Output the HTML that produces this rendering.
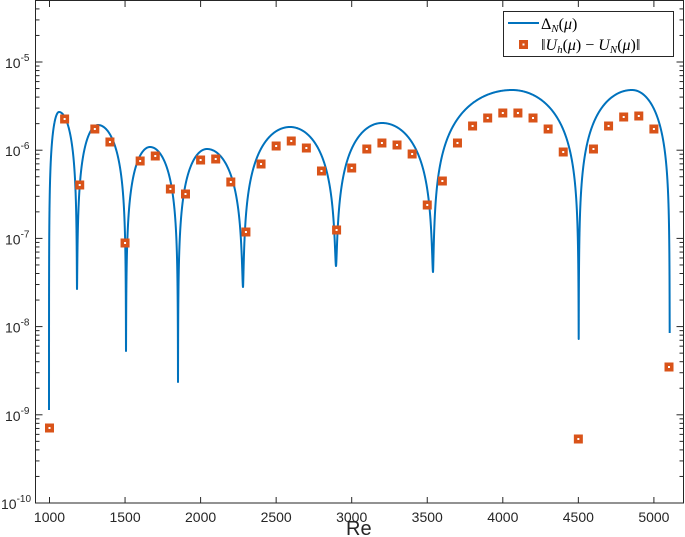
<!DOCTYPE html>
<html><head><meta charset="utf-8"><style>
html,body{margin:0;padding:0;background:#fff;}
svg{display:block;font-family:"Liberation Sans",sans-serif;}
</style></head><body>
<svg id="s" width="685" height="537" viewBox="0 0 685 537" xmlns="http://www.w3.org/2000/svg">
<rect x="0" y="0" width="685" height="537" fill="#fff"/>
<g id="ticks" stroke="#262626" stroke-width="1"></g>
<path id="curve" fill="none" stroke="#0072BD" stroke-width="2" stroke-linejoin="round"/>
<g id="marks"></g>
<rect x="35.5" y="0.5" width="648" height="502.5" fill="none" stroke="#262626" stroke-width="1"/>
<g id="labels" fill="#262626" font-size="14"></g>
<text x="346" y="535" font-size="20" fill="#262626">Re</text>
<rect x="503.5" y="11.5" width="170" height="45" fill="#fff" stroke="#262626" stroke-width="1"/>
<line x1="508" y1="23" x2="539" y2="23" stroke="#0072BD" stroke-width="2"/>
<rect x="519" y="40" width="9" height="9" fill="#D95319"/><rect x="522.5" y="43.5" width="2" height="2" fill="#fff"/>
<text x="541" y="29" font-family="Liberation Serif,serif" font-size="16" fill="#000">Δ<tspan font-style="italic" font-size="11" dy="3">N</tspan><tspan dy="-3">(</tspan><tspan font-style="italic">μ</tspan>)</text>
<text x="541" y="50" font-family="Liberation Serif,serif" font-size="16" fill="#000">‖<tspan font-style="italic">U</tspan><tspan font-style="italic" font-size="11" dy="3">h</tspan><tspan dy="-3">(</tspan><tspan font-style="italic">μ</tspan>) − <tspan font-style="italic">U</tspan><tspan font-style="italic" font-size="11" dy="3">N</tspan><tspan dy="-3">(</tspan><tspan font-style="italic">μ</tspan>)‖</text>
</svg>
<script>
var NS="http://www.w3.org/2000/svg";
function el(t,a,p){var e=document.createElementNS(NS,t);for(var k in a)e.setAttribute(k,a[k]);p.appendChild(e);return e;}
var T=document.getElementById('ticks'),L=document.getElementById('labels');
var D=88.2,Y10=503;
function ypx(e){return Y10-(e+10)*D;}
for(var e=-10;e<=-4;e++){
  for(var m=1;m<10;m++){
    var y=ypx(e)-Math.log10(m)*D; if(y<1||y>503)continue;
    var len=(m==1)?7:4;
    el('line',{x1:35.5,y1:y,x2:35.5+len,y2:y},T);
    el('line',{x1:683.5,y1:y,x2:683.5-len,y2:y},T);
  }
  if(e<=-5){var y0=ypx(e);var t=el('text',{x:e==-10?1:5,y:y0+6},L);t.textContent='10';
   var s=el('tspan',{dy:-7,'font-size':10},t);s.textContent=String(e);}
}
for(var r=1000;r<=5000;r+=500){var x=49.5+(r-1000)*0.1511;
 el('line',{x1:x,y1:503,x2:x,y2:497},T);el('line',{x1:x,y1:1,x2:x,y2:7},T);
 var t=el('text',{x:x,y:522,'text-anchor':'middle'},L);t.textContent=r;}
var Z=[[49,410],[77,289],[126,351],[178,382],[243,287],[336,266],[433,272],[578.7,339],[669.7,333]];
var P=[[59,112],[98,125],[150,147],[207,149],[290,127],[382,123],[512,90],[632,90]];
var d='';
for(var i=0;i<P.length;i++){
 var x0=Z[i][0],x1=Z[i+1][0],px=P[i][0],py=P[i][1];
 var r0=Math.pow(10,-(Z[i][1]-py)/D),r1=Math.pow(10,-(Z[i+1][1]-py)/D);
 var N=600;
 for(var j=0;j<=N;j++){
  var u=j/N; u=0.5-0.5*Math.cos(Math.PI*u); u=0.5-0.5*Math.cos(Math.PI*u);
  var x=x0+(x1-x0)*u,s;
  if(x<px)s=0.5*(x-x0)/(px-x0);else s=0.5+0.5*(x-px)/(x1-px);
  var sn=Math.sin(Math.PI*s),rr=r0*(1-s)+r1*s;
  var v=Math.sqrt(sn*sn+rr*rr);
  var y=py-D*Math.log10(v);
  d+=(d?'L':'M')+x.toFixed(2)+' '+y.toFixed(2);
 }
}
document.getElementById('curve').setAttribute('d',d);
var M=[428,119,185,129,142,243,161,156,189,194,160,159,182,232,164,146,141,148,171,230,168,149,143,145,154,205,181,143,126,118,113,113,118,129,152,439,149,126,117,116,129,367];
var G=document.getElementById('marks');
for(var k=0;k<M.length;k++){var x=49.5+15.11*k,y=M[k];
 el('rect',{x:x-4.5,y:y-4.5,width:9,height:9,fill:'#D95319'},G);
 el('rect',{x:x-1,y:y-1,width:2,height:2,fill:'#fff'},G);}
</script>
</body></html>
